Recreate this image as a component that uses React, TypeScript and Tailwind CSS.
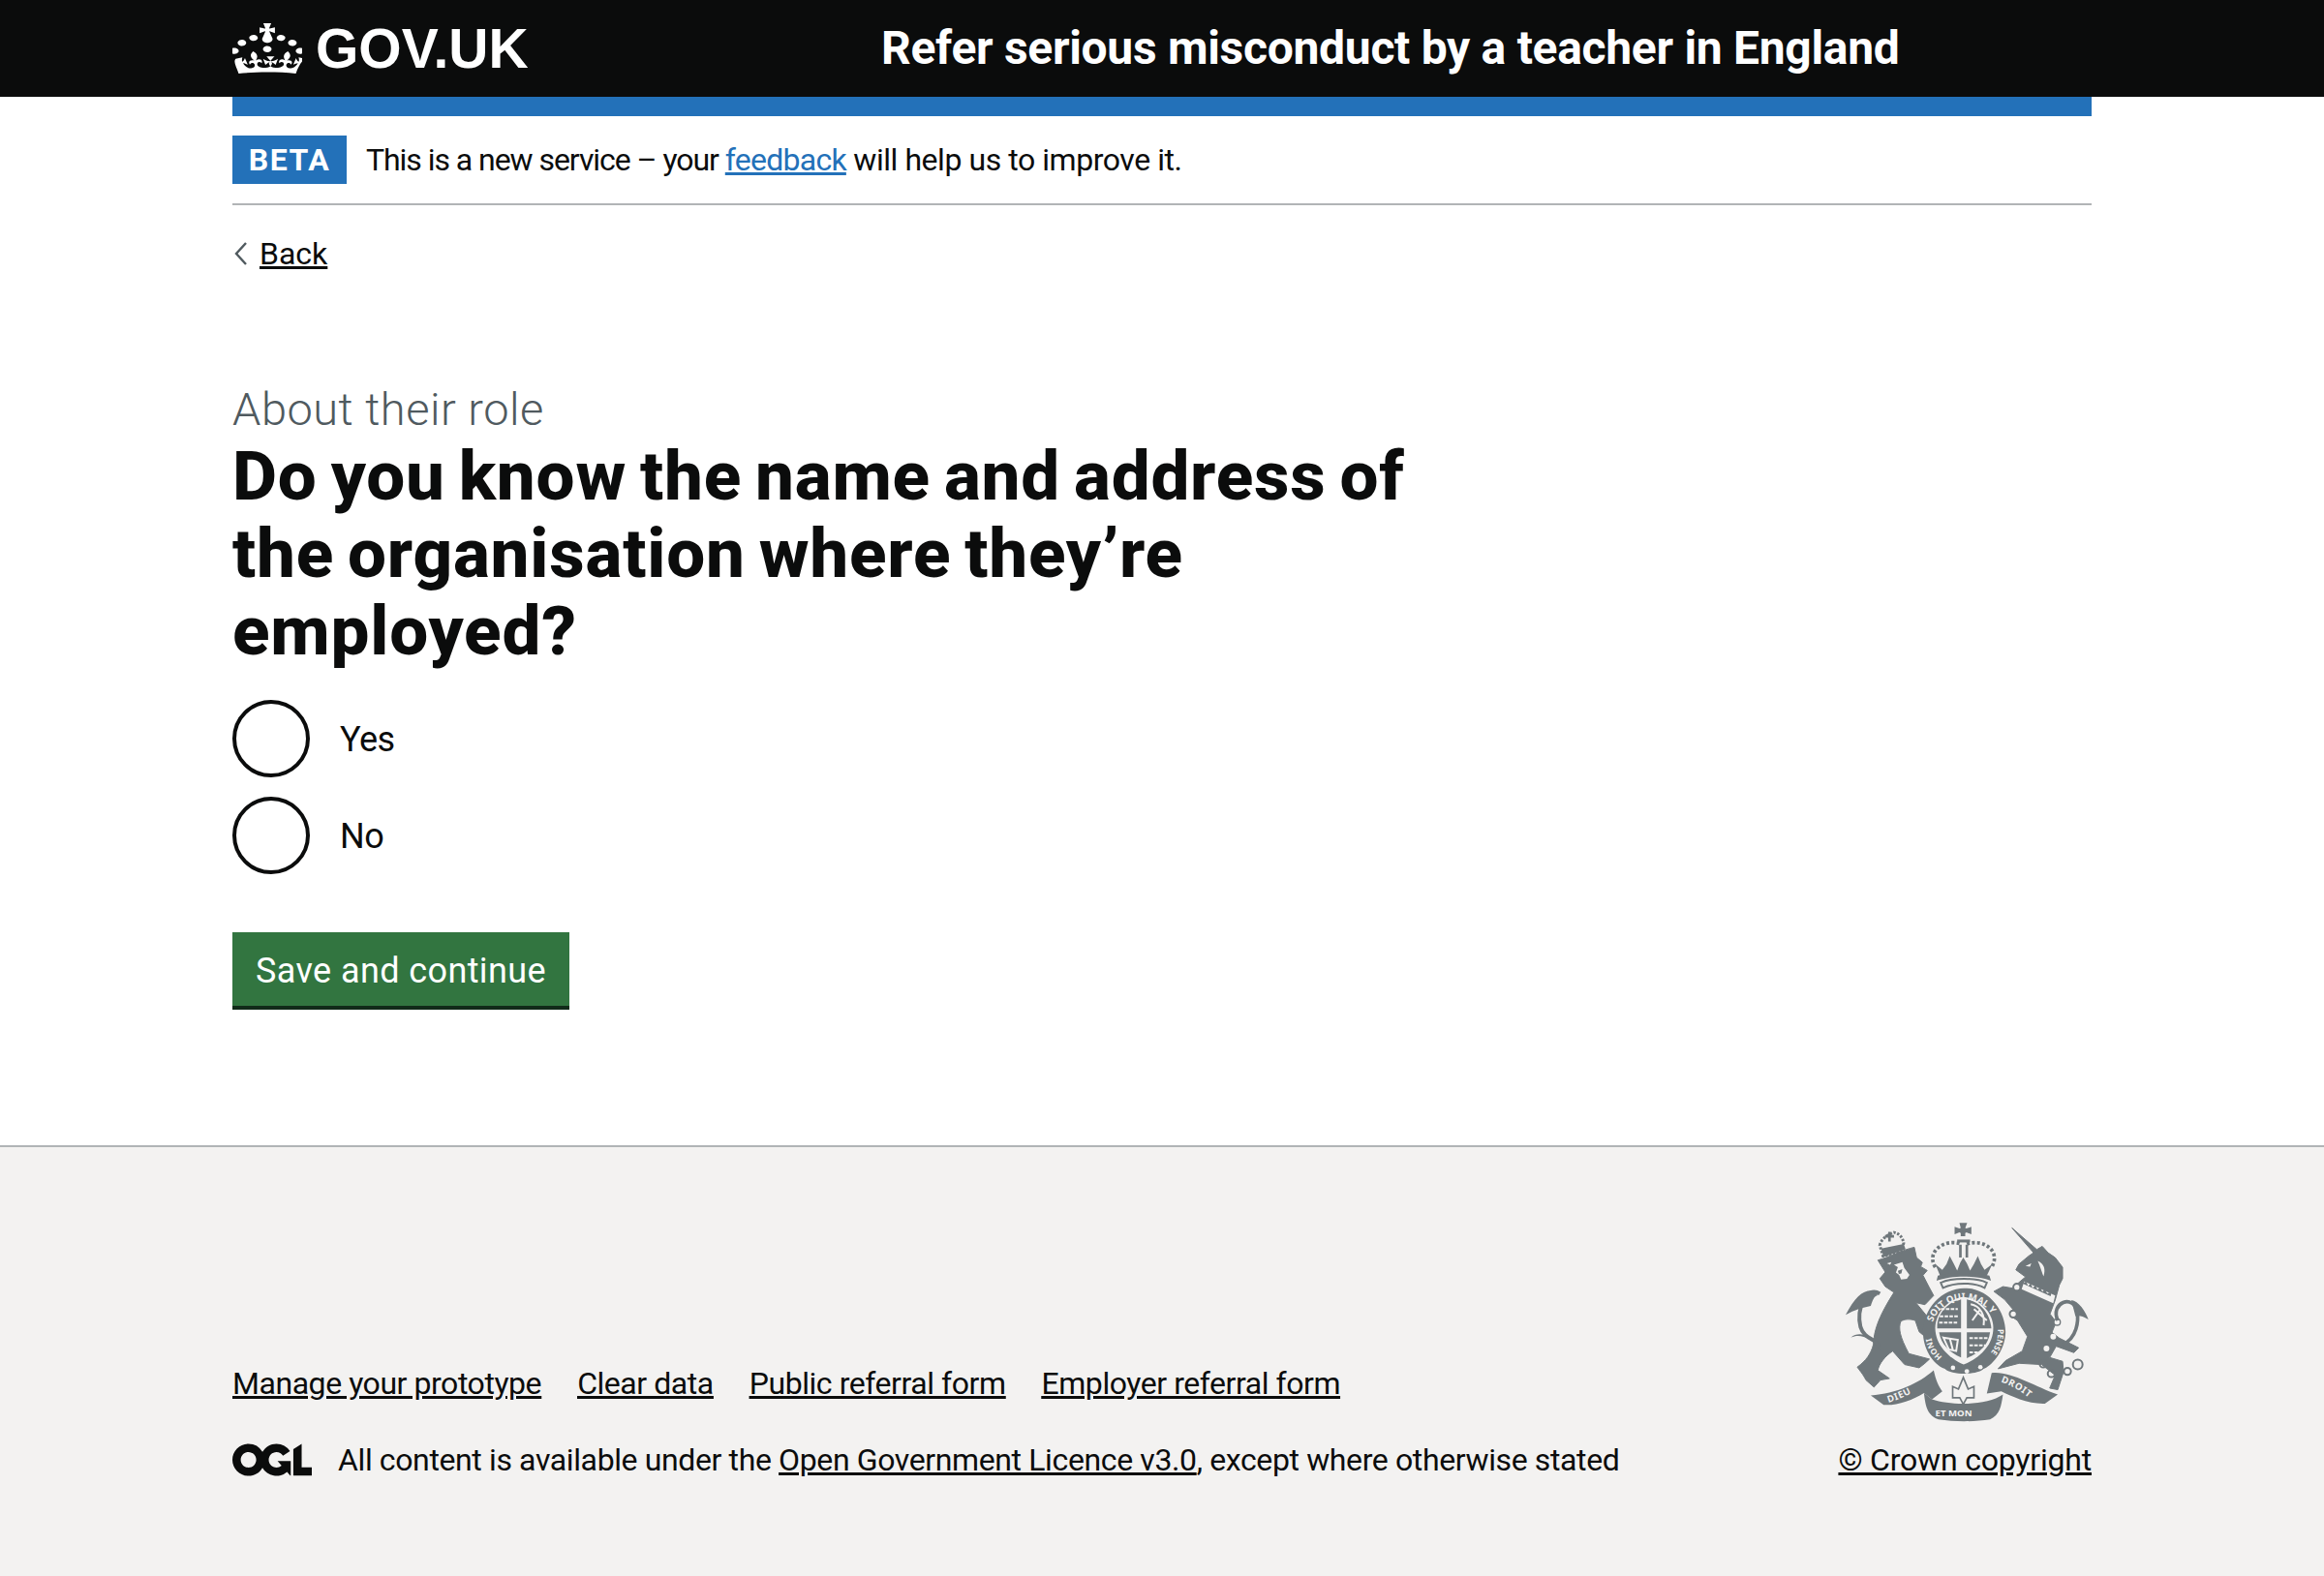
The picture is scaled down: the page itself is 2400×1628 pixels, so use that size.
function Crown() {
  return (
    <svg viewBox="1 0 30 30" preserveAspectRatio="none" className="w-[72px] h-[52px] shrink-0" fill="currentColor">
      <path d="M22.6 10.4c-1 .4-2-.1-2.4-1-.4-.9.1-2 1-2.4.9-.4 2 .1 2.4 1s-.1 2-1 2.4m-5.9 6.7c-.9.4-2-.1-2.4-1-.4-.9.1-2 1-2.4.9-.4 2 .1 2.4 1s-.1 2-1 2.4m10.8-3.7c-1 .4-2-.1-2.4-1-.4-.9.1-2 1-2.4.9-.4 2 .1 2.4 1s0 2-1 2.4m3.3 4.8c-1 .4-2-.1-2.4-1-.4-.9.1-2 1-2.4.9-.4 2 .1 2.4 1s-.1 2-1 2.4M17 4.7l2.3 1.2V2.5l-2.3.7-.2-.2.9-3h-3.4l.9 3-.2.2c-.1.1-2.3-.7-2.3-.7v3.4L15 4.7c.1.1.1.2.2.2l-1.3 4c-.1.2-.1.4-.1.6 0 1.1.8 2 1.9 2.2h.7c1-.2 1.9-1.1 1.9-2.2 0-.2 0-.4-.1-.6l-1.3-4c-.1-.1 0-.2.1-.2m-7.6 5.7c.9.4 2-.1 2.4-1 .4-.9-.1-2-1-2.4-.9-.4-2 .1-2.4 1s0 2 1 2.4m-5 3c.9.4 2-.1 2.4-1 .4-.9-.1-2-1-2.4-.9-.4-2 .1-2.4 1s.1 2 1 2.4m-3.2 4.8c.9.4 2-.1 2.4-1 .4-.9-.1-2-1-2.4-.9-.4-2 .1-2.4 1s0 2 1 2.4m14.8 11c4.4 0 8.6.3 12.3.8 1.1-4.5 2.4-7 3.7-8.8l-2.5-.9c.2 1.3.3 1.9 0 2.7-.4-.4-.8-1.1-1.1-2.3l-1.2 4c.7-.5 1.3-.8 2-.9-1.1 2.5-2.6 3.1-3.5 3-1.1-.2-1.7-1.2-1.5-2.1.3-1.2 1.5-1.5 2.1-.1 1.1-2.3-.8-3-2-2.3 1.9-1.9 2.1-3.5.6-5.6-2.1 1.6-2.1 3.2-1.2 5.5-1.2-1.4-3.2-.6-2.5 1.6.9-1.4 2.1-.5 1.9.8-.2 1.1-1.7 2.1-3.5 1.9-2.7-.2-2.9-2.1-2.9-3.6.7-.1 1.9.5 2.9 1.9l1-3.6c-1.1 1.1-2.1 1.4-3.2 1.3.5-.9 1.7-2.7 1.7-2.7h-3.4s1.1 1.8 1.7 2.7c-1 .2-2.1-.2-3.2-1.3l1 3.6c1-1.4 2.1-2.1 2.9-1.9 0 1.5-.2 3.4-2.9 3.6-1.9.2-3.4-.8-3.5-1.9-.2-1.3 1-2.2 1.9-.8.7-2.3-1.2-3-2.5-1.6.9-2.2.9-3.9-1.2-5.5-1.5 2-1.3 3.7.6 5.6-1.2-.7-3.1 0-2 2.3.6-1.4 1.8-1.1 2.1.1.2.9-.3 1.9-1.5 2.1-.9.2-2.4-.5-3.5-3 .6 0 1.2.3 2 .9l-1.2-4c-.3 1.1-.7 1.9-1.1 2.3-.3-.8-.2-1.4 0-2.7l-2.9.9C1.3 23 2.6 25.5 3.7 30c3.7-.5 7.9-.8 12.3-.8" />
    </svg>
  );
}
function Ogl() {
  return (
    <svg viewBox="0 0 483.2 195.7" className="w-[82px] h-[34px] shrink-0" fill="#0b0c0c">
      <path d="M421.5 142.8V.1l-50.7 32.3v161.1h112.4v-50.7zm-122.3-9.6A47.12 47.12 0 0 1 221 97.8c0-26 21.1-47.1 47.1-47.1 16.7 0 31.4 8.7 39.7 21.8l42.7-27.2A97.63 97.63 0 0 0 268.1 0c-36.5 0-68.3 20.1-85.1 49.7A98 98 0 0 0 97.8 0C43.9 0 0 43.9 0 97.8s43.9 97.8 97.8 97.8c36.5 0 68.3-20.1 85.1-49.7a97.76 97.76 0 0 0 149.6 25.4l19.4 22.2h3v-87.8h-80l24.3 27.5zM97.8 145c-26 0-47.1-21.1-47.1-47.1s21.1-47.1 47.1-47.1 47.2 21 47.2 47S123.8 145 97.8 145" />
    </svg>
  );
}
function Crest() {
  const c = "#6f777b";
  const bg = "#f3f2f1";
  const sans = "Noto Sans, sans-serif";
  return (
    <svg viewBox="60 30 775 630" className="w-[258px] h-[210px]" fill={c}>
      <defs>
        <path id="gt" d="M342 350 A104 104 0 0 1 538 350" />
        <path id="gr" d="M544 372 A104 104 0 0 1 505 462" />
        <path id="gl" d="M372 458 A104 104 0 0 1 336 390" />
        <path id="rl" d="M205 600 Q265 582 325 540" />
        <path id="rr" d="M553 536 Q610 555 660 602" />
      </defs>
      {/* lion */}
      <path strokeLinejoin="round" stroke={c} strokeWidth="3" d="M172 158 C205 150 250 125 285 118 L292 150 L310 165 L305 178 L325 190 L312 205 L330 240 L345 268 L318 296 L290 290 L335 345 L345 365 L338 392 L318 395 L300 380 L288 345 C270 340 255 340 243 348 C235 370 240 395 268 448 L332 465 L318 478 L300 492 L255 482 L218 440 C195 455 175 480 172 500 L208 525 L180 530 L160 552 L135 530 C125 510 115 500 108 490 C135 470 150 450 158 420 C160 380 170 340 222 258 L195 240 L178 215 L195 195 Z" />
      <path d="M178 262 C135 235 105 310 118 365 C130 405 165 400 178 425" fill="none" stroke={c} strokeWidth="12" />
      <path d="M170 255 C130 245 105 265 72 328 C100 312 125 305 150 300 C155 285 160 270 170 268 Z" />
      <path d="M88 398 C115 385 150 395 182 440 L178 418 C150 395 115 375 88 398 Z" />
      <path d="M178 112 C182 90 210 75 222 72 C240 75 250 90 252 105 L245 130 L188 145 Z" fill="none" stroke={c} strokeWidth="9" strokeDasharray="7 5" />
      <path d="M204 70 h8 v10 h10 v8 h-10 v12 h-8 v-12 h-10 v-8 h10 z" />
      <path d="M182 122 L252 108 L258 124 L190 148 Z" />
      <path d="M222 172 l26 -8 l6 18 l16 22 l-8 12 l-18 2 l-6 -14 l-10 -8 l6 -16 z M200 168 l14 -4 l-4 8 z" fill={bg} />
      <path d="M248 186 l-14 5 l3 10 l8 -2 z" />
      {/* big crown */}
      <path d="M425 42 h24 l-6 16 l4 2 l15 -6 v24 l-15 -6 l-4 2 v10 h-14 v-10 l-4 -2 l-15 6 v-24 l15 6 l4 -2 z" />
      <path d="M418 94 h40 v9 h-40 z" />
      <path d="M350 180 C320 130 380 90 430 108 M448 108 C500 90 555 130 525 180" fill="none" stroke={c} strokeWidth="11" strokeDasharray="9 7" />
      <path d="M424 110 h8 v40 h-8 z M444 110 h8 v40 h-8 z" />
      <path d="M350 170 L372 188 L385 170 L395 145 L408 170 L418 190 L428 165 L437 150 L448 168 L458 190 L470 170 L482 145 L492 170 L503 188 L527 170 L510 206 L365 206 Z" />
      <path d="M358 206 C400 195 480 195 518 206 L523 222 C480 205 400 205 354 222 Z" />
      <path d="M367 228 C400 212 480 212 510 228 L503 244 C470 226 410 226 374 244 Z" fill={bg} stroke={c} strokeWidth="6" />
      {/* garter */}
      <path d="M440 245 C520 245 570 320 568 385 C565 445 520 490 500 495 C480 515 400 515 380 495 C340 480 312 430 312 380 C312 310 370 245 440 245 Z" />
      <path d="M350 368 C350 320 395 275 438 272 C485 275 530 320 530 368 C530 420 490 460 438 482 C390 460 350 420 350 368 Z" fill={bg} />
      <path d="M356 360 C358 320 395 285 430 280 L430 370 L356 370 Z" />
      <path d="M448 280 C485 285 520 320 524 370 L448 370 Z" />
      <path d="M362 382 L430 382 L430 460 C395 445 368 420 362 382 Z" />
      <path d="M448 382 L520 382 C515 420 490 445 448 462 Z" />
      <path d="M368 310 h52 M364 332 h58 M362 352 h60 M456 400 h56 M456 422 h50 M456 444 h30" stroke={bg} strokeWidth="6" strokeDasharray="11 4" fill="none" />
      <path d="M375 398 L420 405 L415 440 L392 435 Z M395 400 L405 438" stroke={bg} strokeWidth="6" fill="none" />
      <path d="M460 295 C490 300 505 330 500 360 M465 345 L490 310 M470 310 L510 345" stroke={bg} strokeWidth="6" fill="none" />
      <text fontFamily={sans} fontSize="29" fontWeight="700" fill={bg}><textPath href="#gt">SOIT QUI MAL Y</textPath></text>
      <text fontFamily={sans} fontSize="25" fontWeight="700" fill={bg}><textPath href="#gr">PENSE</textPath></text>
      <text fontFamily={sans} fontSize="25" fontWeight="700" fill={bg}><textPath href="#gl">HONI</textPath></text>
      <circle cx="405" cy="492" r="7" fill={bg} />
      <circle cx="448" cy="503" r="7" fill={bg} />
      <circle cx="490" cy="490" r="7" fill={bg} />
      {/* unicorn */}
      <path strokeLinejoin="round" stroke={c} strokeWidth="3" d="M588 58 L665 125 L682 115 L700 135 L722 150 L745 180 L745 215 L735 235 L722 282 L706 325 L725 350 L712 382 L735 400 L795 430 L780 445 L725 425 L705 460 L745 472 L748 505 L730 560 L705 555 L722 515 L680 482 L610 478 L545 495 L568 470 L620 440 L636 395 L605 345 L585 332 L592 312 L565 280 L532 255 L560 240 L590 245 L612 225 L630 210 L600 188 L610 170 L640 145 L655 135 Z" />
      <path d="M626 224 L722 268 L716 292 L618 248 Z" fill={bg} />
      <path d="M632 224 l6 14 l8 -8 l6 14 l9 -8 l6 14 l9 -8 l6 14 l9 -8 l6 14 l14 -6 l-3 14 l-88 -40 Z" />
      <path d="M630 176 l18 -8 l-4 10 z M668 160 c20 10 25 25 18 48 c-8 -20 -10 -30 -18 -48 z" fill={bg} />
      <circle cx="603" cy="242" r="11" fill={bg} stroke={c} strokeWidth="6" />
      <circle cx="592" cy="325" r="11" fill={bg} stroke={c} strokeWidth="6" />
      <circle cx="728" cy="350" r="10" fill={bg} stroke={c} strokeWidth="4" />
      <circle cx="716" cy="395" r="9" fill={bg} />
      <circle cx="695" cy="432" r="9" fill={bg} />
      <path d="M730 345 C705 290 780 260 790 320 C795 345 790 400 745 420" fill="none" stroke={c} strokeWidth="11" />
      <path d="M772 282 C795 285 815 315 825 342 C805 330 795 330 785 332 Z" />
      <g fill="none" stroke={c} strokeWidth="6">
        <circle cx="685" cy="480" r="11" /><circle cx="710" cy="510" r="11" /><circle cx="760" cy="503" r="11" /><circle cx="792" cy="482" r="15" />
      </g>
      {/* motto */}
      <path d="M150 578 C230 572 300 540 345 500 C352 530 360 550 372 565 L340 590 L315 570 C280 592 230 610 190 607 Z" />
      <path d="M315 570 C320 620 330 640 360 652 C410 660 470 660 520 652 C550 640 555 610 560 575 C510 610 400 610 340 590 Z" />
      <path d="M525 508 C580 500 660 550 730 575 L690 603 C640 605 585 580 555 565 L510 572 Z" />
      <path d="M437 522 L452 558 L470 550 L470 585 L448 585 L437 605 L426 585 L404 585 L404 550 L422 558 Z" fill={bg} stroke={c} strokeWidth="5" />
      <text fontFamily={sans} fontSize="29" fontWeight="700" fill={bg} letterSpacing="2"><textPath href="#rl">DIEU</textPath></text>
      <text fontFamily={sans} fontSize="29" fontWeight="700" fill={bg} x="350" y="642">ET MON</text>
      <text fontFamily={sans} fontSize="29" fontWeight="700" fill={bg} letterSpacing="2"><textPath href="#rr">DROIT</textPath></text>
    </svg>
  );
}
function Radio({ label }: { label: string }) {
  return (
    <label className="flex items-center gap-[30px]">
      <span className="w-[80px] h-[80px] rounded-full border-[4px] border-[#0b0c0c] bg-white shrink-0" />
      <span className="text-[36px] leading-[50px] tracking-[-0.5px] pl-[1px] pt-[2px]">{label}</span>
    </label>
  );
}
export default function App() {
  return (
    <div className="min-h-[1628px] flex flex-col bg-white text-[#0b0c0c] font-['Roboto',sans-serif]">
      <header className="h-[100px] bg-[#0b0c0c] text-white px-[240px] flex items-center">
        <a className="flex items-center w-[670px] shrink-0">
          <Crown />
          <span className="ml-[14px] font-['Liberation_Sans',sans-serif] font-bold text-[57px] leading-none">GOV.UK</span>
        </a>
        <span className="font-bold text-[48px] leading-none tracking-[-0.3px]">Refer serious misconduct by a teacher in England</span>
      </header>
      <div className="mx-[240px] flex-1 flex flex-col">
        <div className="h-[20px] bg-[#2371b9]" />
        <div className="h-[92px] border-b-[2px] border-[#b1b4b6] flex items-center gap-[20px]">
          <strong className="h-[50px] w-[118px] bg-[#2371b9] text-white font-bold text-[32px] tracking-[1.5px] flex items-center justify-center">BETA</strong>
          <p className="text-[32px] tracking-[-0.75px]"><span className="tracking-[-1.05px]">This is a new service – your </span><a className="text-[#2371b9] underline">feedback</a><span className="tracking-[-0.45px]"> will help us to improve it.</span></p>
        </div>
        <a className="mt-[30px] flex items-center gap-[12px] text-[32px] leading-[40px] pl-[2px]">
          <svg viewBox="0 0 14 24" className="w-[14px] h-[24px]" fill="none" stroke="#505a5f" strokeWidth="2.4"><path d="M12 1 L2 12 L12 23" /></svg>
          <span className="underline">Back</span>
        </a>
        <main className="mt-[111px] flex flex-col">
          <span className="text-[47px] leading-[60px] font-light tracking-[0.5px] text-[#505a5f]">About their role</span>
          <h1 className="w-[1260px] font-extrabold text-[71px] leading-[80px] tracking-[0.8px] [word-spacing:-4.5px] -mt-[1px]">Do you know the name and address of the organisation where they’re employed?</h1>
          <div className="mt-[31px] flex flex-col gap-[20px]">
            <Radio label="Yes" />
            <Radio label="No" />
          </div>
          <button className="mt-[60px] w-[348px] h-[76px] bg-[#327540] shadow-[0_4px_0_#112b19] text-white text-[36px] tracking-[0.4px] leading-[76px] text-left pl-[24px] pt-[2px]">Save and continue</button>
        </main>
        <div className="mb-[140px]" />
      </div>
      <footer className="h-[445px] bg-[#f3f2f1] border-t-[2px] border-[#b1b4b6] px-[240px] flex items-end pb-[96px] justify-between">
        <div className="flex flex-col">
          <div className="flex gap-[37px] text-[32px] tracking-[-0.45px] underline">
            <a>Manage your prototype</a><a>Clear data</a><a>Public referral form</a><a>Employer referral form</a>
          </div>
          <div className="mt-[31px] flex items-center gap-[27px] text-[32px] tracking-[-0.38px]">
            <Ogl />
            <span>All content is available under the <a className="underline">Open Government Licence v3.0</a>, except where otherwise stated</span>
          </div>
        </div>
        <div className="flex flex-col items-end">
          <Crest />
          <a className="mt-[15px] text-[32px] tracking-[-0.2px] underline">© Crown copyright</a>
        </div>
      </footer>
    </div>
  );
}
